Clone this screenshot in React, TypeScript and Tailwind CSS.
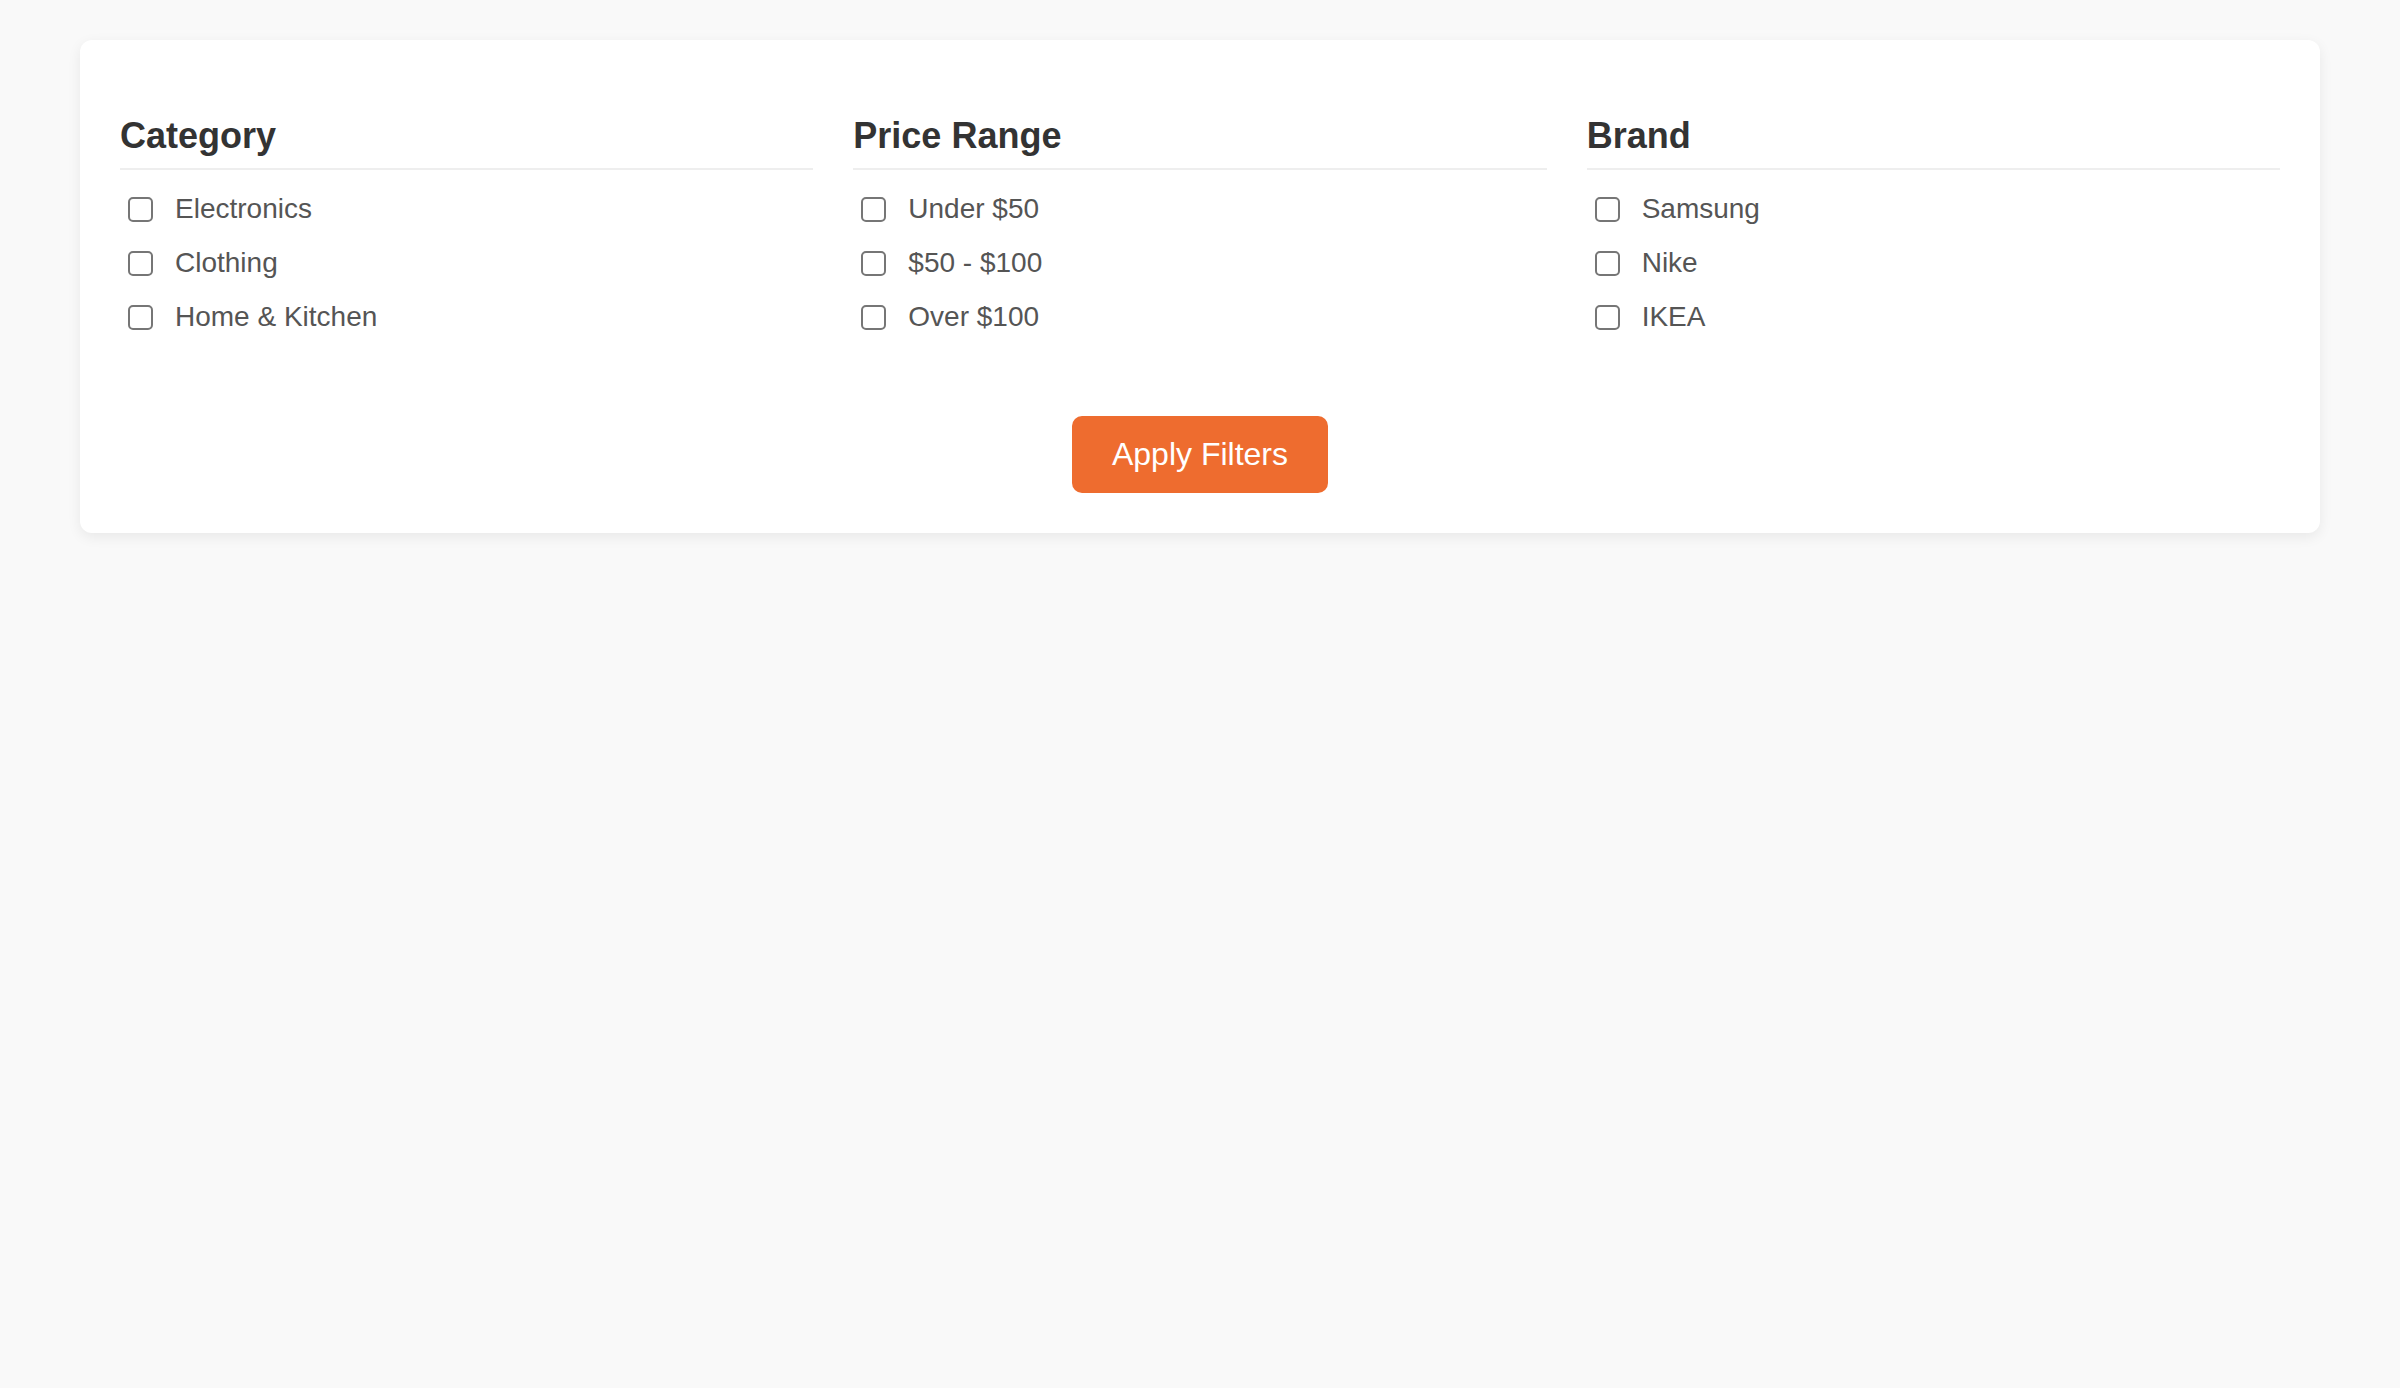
import React from 'react';

const filterGroups = [
  { title: 'Category', options: ['Electronics', 'Clothing', 'Home & Kitchen'] },
  { title: 'Price Range', options: ['Under $50', '$50 - $100', 'Over $100'] },
  { title: 'Brand', options: ['Samsung', 'Nike', 'IKEA'] },
];

const App: React.FC = () => {
  return (
    <div className="min-h-screen bg-[#f9f9f9] pt-10 px-20 font-['Liberation_Sans',Arial,sans-serif]">
      <div className="bg-white rounded-xl shadow-[0_4px_14px_rgba(0,0,0,0.07)] px-10 pt-[75px] pb-10">
        <div className="grid grid-cols-3 gap-10">
          {filterGroups.map((group) => (
            <section key={group.title}>
              <h3 className="text-[36px] leading-[41px] font-bold text-[#333] pb-3 border-b-2 border-[#eeeeee]">
                {group.title}
              </h3>
              <ul className="mt-3">
                {group.options.map((opt) => (
                  <li key={opt} className="h-[54px] flex items-center">
                    <label className="flex items-center cursor-pointer">
                      <input
                        type="checkbox"
                        className="appearance-none ml-2 mr-[22px] w-[25px] h-[25px] border-2 border-[#767676] rounded-[5px] bg-white"
                      />
                      <span className="text-[28px] leading-[32px] text-[#555]">{opt}</span>
                    </label>
                  </li>
                ))}
              </ul>
            </section>
          ))}
        </div>
        <div className="flex justify-center mt-[72px]">
          <button className="bg-[#ee6c2f] text-white text-[32px] leading-[37px] px-10 py-5 rounded-[10px]">
            Apply Filters
          </button>
        </div>
      </div>
    </div>
  );
};

export default App;
